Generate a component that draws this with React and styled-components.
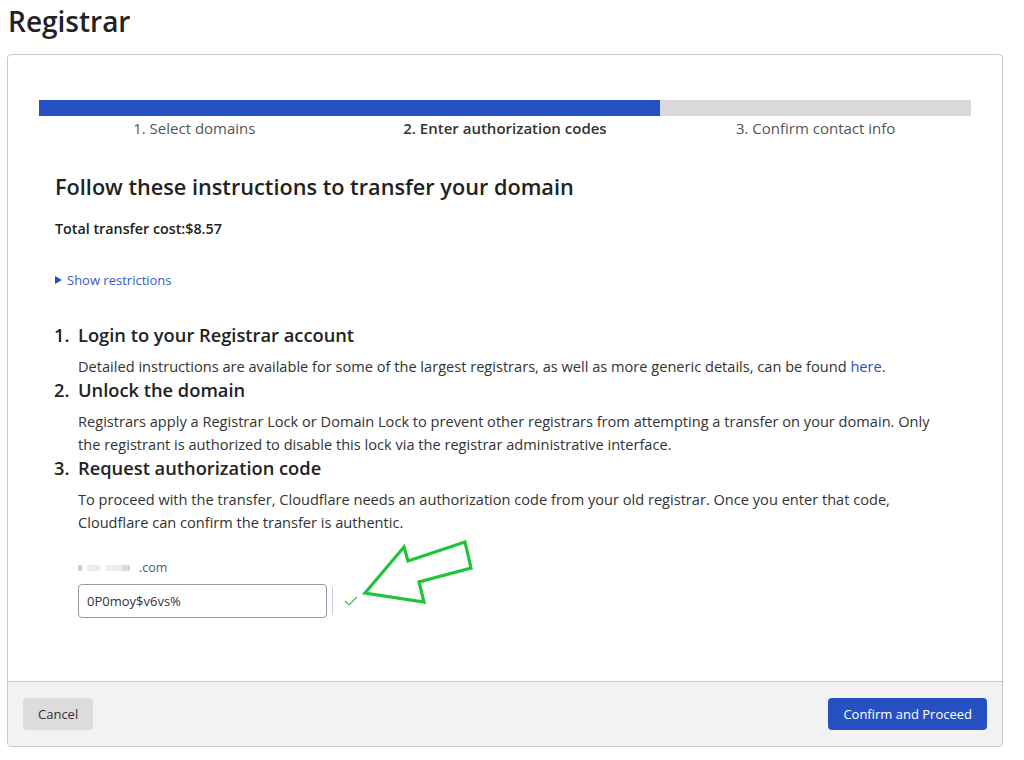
import React from 'react';
import styled, { createGlobalStyle } from 'styled-components';

const GlobalStyle = createGlobalStyle`
  html, body {
    margin: 0;
    padding: 0;
    background: #fff;
    font-family: "Open Sans", "Noto Sans", sans-serif;
    color: #333;
  }
`;

const Page = styled.div`
  width: 1024px;
  padding: 0 21px 0 7px;
  box-sizing: border-box;
`;

const Title = styled.h1`
  margin: 0;
  padding: 2px 0 0 1px;
  height: 52px;
  font-size: 28px;
  font-weight: 600;
  color: #222;
  line-height: 38px;
`;

const Card = styled.div`
  border: 1px solid #c8c8c8;
  border-radius: 4px;
  overflow: hidden;
  display: flex;
  flex-direction: column;
`;

const Body = styled.div`
  padding: 45px 31px 63px 31px;
`;

const Track = styled.div`
  height: 16px;
  background: #d9d9d9;
`;

const Fill = styled.div`
  height: 100%;
  background: #2651c2;
`;

const Steps = styled.div`
  display: grid;
  grid-template-columns: repeat(3, 1fr);
  margin-top: 2px;
`;

const StepLabel = styled.div`
  text-align: center;
  font-size: 15px;
  line-height: 20px;
  color: ${({ $active }) => ($active ? '#333' : '#555')};
  font-weight: ${({ $active }) => ($active ? 600 : 400)};
`;

const Content = styled.div`
  padding: 0 16px;
`;

const Heading = styled.h2`
  margin: 34px 0 0;
  font-size: 21.7px;
  font-weight: 600;
  line-height: 30px;
  color: #222;
`;

const Cost = styled.div`
  margin-top: 17px;
  font-size: 14.3px;
  font-weight: 600;
  color: #222;
  line-height: 20px;
`;

const Toggle = styled.div`
  margin-top: 31px;
  font-size: 13px;
  line-height: 20px;
  color: #3a5bc7;
  display: flex;
  align-items: center;
  gap: 5px;
`;

const Triangle = styled.span`
  width: 0;
  height: 0;
  border-left: 7px solid #2651c2;
  border-top: 4px solid transparent;
  border-bottom: 4px solid transparent;
`;

const List = styled.ol`
  margin: 33px 0 0 -1px;
  padding: 0;
  list-style: none;
`;

const Item = styled.li`
  display: grid;
  grid-template-columns: 24px 1fr;
`;

const Num = styled.span`
  font-size: 18.3px;
  font-weight: 600;
  line-height: 24px;
  color: #222;
`;

const ItemTitle = styled.div`
  font-size: 18.3px;
  font-weight: 600;
  line-height: 24px;
  color: #222;
`;

const Desc = styled.p`
  margin: 8px 0 0;
  font-size: 14.6px;
  line-height: 23px;
  color: #333;
`;

const Link = styled.a`
  color: #2651c2;
  text-decoration: none;
`;

const Field = styled.div`
  margin: 26px 0 0 23px;
`;

const DomainLabel = styled.div`
  font-size: 12.5px;
  line-height: 16px;
  color: #555;
  display: flex;
  align-items: center;
`;

const Blur = styled.span`
  display: inline-block;
  width: 60px;
  height: 6px;
  margin-right: 1px;
  background: linear-gradient(90deg, #bbb 0 4px, transparent 4px 9px, #e4e4e4 9px 22px, transparent 22px 27px, #e6e6e6 27px 44px, #c9c9c9 44px 52px, transparent 52px);
  opacity: 0.7;
`;

const InputRow = styled.div`
  margin-top: 8px;
  display: flex;
  align-items: center;
`;

const CodeInput = styled.input`
  width: 249px;
  height: 34px;
  box-sizing: border-box;
  border: 1px solid #999;
  border-radius: 4px;
  padding: 0 8px;
  font-family: inherit;
  font-size: 13px;
  color: #333;
  outline: none;
`;

const Divider = styled.span`
  width: 1px;
  height: 28px;
  margin-left: 5px;
  background: #c5cbe0;
`;

const Check = styled.svg`
  margin-left: 11px;
`;

const Annotation = styled.svg`
  margin-left: 4px;
  margin-top: -56px;
`;

const Footer = styled.div`
  border-top: 1px solid #c8c8c8;
  background: #f2f2f2;
  display: flex;
  justify-content: space-between;
  align-items: center;
  padding: 16px 15px 16px 15px;
`;

const Button = styled.button`
  height: 32px;
  padding: 0 15px;
  border: none;
  border-radius: 4px;
  font-family: inherit;
  font-size: 13px;
  background: ${({ $primary }) => ($primary ? '#2651c2' : '#dcdcdc')};
  color: ${({ $primary }) => ($primary ? '#fff' : '#333')};
  cursor: pointer;
`;

const steps = [
  {
    title: 'Login to your Registrar account',
    text: (
      <>
        Detailed instructions are available for some of the largest registrars, as well as more generic details, can be found{' '}
        <Link href="#">here</Link>.
      </>
    ),
  },
  {
    title: 'Unlock the domain',
    text: 'Registrars apply a Registrar Lock or Domain Lock to prevent other registrars from attempting a transfer on your domain. Only the registrant is authorized to disable this lock via the registrar administrative interface.',
  },
  {
    title: 'Request authorization code',
    text: 'To proceed with the transfer, Cloudflare needs an authorization code from your old registrar. Once you enter that code, Cloudflare can confirm the transfer is authentic.',
  },
];

export default function App() {
  return (
    <Page>
      <GlobalStyle />
      <Title>Registrar</Title>
      <Card>
        <Body>
          <Track>
            <Fill style={{ width: `${(2 / 3) * 100}%` }} />
          </Track>
          <Steps>
            <StepLabel>1. Select domains</StepLabel>
            <StepLabel $active>2. Enter authorization codes</StepLabel>
            <StepLabel>3. Confirm contact info</StepLabel>
          </Steps>
          <Content>
            <Heading>Follow these instructions to transfer your domain</Heading>
            <Cost>Total transfer cost:$8.57</Cost>
            <Toggle>
              <Triangle />
              Show restrictions
            </Toggle>
            <List>
              {steps.map((s, i) => (
                <Item key={s.title}>
                  <Num>{i + 1}.</Num>
                  <div>
                    <ItemTitle>{s.title}</ItemTitle>
                    <Desc>{s.text}</Desc>
                  </div>
                </Item>
              ))}
            </List>
            <Field>
              <DomainLabel>
                <Blur />
                .com
              </DomainLabel>
              <InputRow>
                <CodeInput defaultValue="0P0moy$v6vs%" />
                <Divider />
                <Check width="14" height="10" viewBox="0 0 14 10">
                  <path d="M1 5 L5 9 L13 1" fill="none" stroke="#4caf50" strokeWidth="1.2" />
                </Check>
                <Annotation width="114" height="66" viewBox="0 0 114 66">
                  <polygon
                    points="3,53 42,7 46,21 103,2 109,28 57,42 62,62"
                    fill="none"
                    stroke="#1fc43a"
                    strokeWidth="3.2"
                    strokeLinejoin="miter"
                  />
                </Annotation>
              </InputRow>
            </Field>
          </Content>
        </Body>
        <Footer>
          <Button>Cancel</Button>
          <Button $primary>Confirm and Proceed</Button>
        </Footer>
      </Card>
    </Page>
  );
}
